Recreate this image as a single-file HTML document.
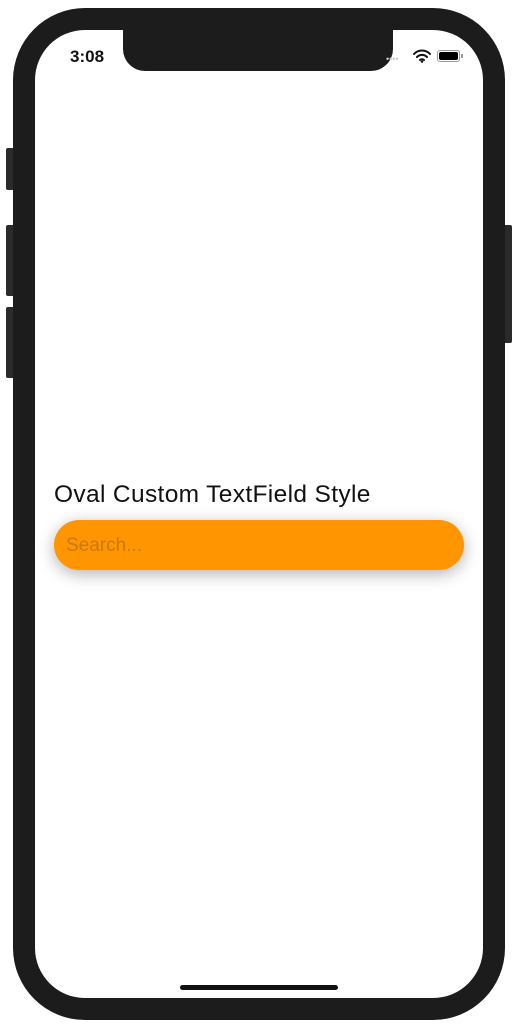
<!DOCTYPE html>
<html><head><style>
body{margin:0;width:517px;height:1024px;background:#fff;position:relative;overflow:hidden;font-family:"Liberation Sans",sans-serif}
.a{position:absolute}
</style></head><body>
<div class="a" style="left:6px;top:148px;width:10px;height:42px;background:#2a2a2a;border-radius:2px"></div>
<div class="a" style="left:6px;top:225px;width:10px;height:71px;background:#2a2a2a;border-radius:2px"></div>
<div class="a" style="left:6px;top:307px;width:10px;height:71px;background:#2a2a2a;border-radius:2px"></div>
<div class="a" style="left:502px;top:225px;width:10px;height:118px;background:#2a2a2a;border-radius:2px"></div>
<div class="a" style="left:13px;top:8px;width:492px;height:1012px;background:#1c1c1c;border-radius:72px"></div>
<div class="a" style="left:35px;top:30px;width:448px;height:968px;background:#fff;border-radius:50px"></div>
<div class="a" style="left:123px;top:28px;width:270px;height:43px;background:#1c1c1c;border-radius:0 0 22px 22px"></div>
<div class="a" style="left:70px;top:47px;font-size:17px;font-weight:bold;color:#111">3:08</div>
<div class="a" style="left:386px;top:54px;font-size:9px;color:#ccc">••••</div>
<svg class="a" style="left:413px;top:49px" width="18" height="14" viewBox="0 0 18 14"><path d="M1 5a11 11 0 0 1 16 0M4 8a7 7 0 0 1 10 0M7 11a3 3 0 0 1 4 0" stroke="#111" stroke-width="2" fill="none" stroke-linecap="round"/><circle cx="9" cy="12.5" r="1.3" fill="#111"/></svg>
<div class="a" style="left:437px;top:50px;width:23px;height:12px;border:1px solid #999;border-radius:3px;box-sizing:border-box;padding:1px"><div style="width:100%;height:100%;background:#000;border-radius:2px"></div></div>
<div class="a" style="left:461px;top:54px;width:2px;height:4px;background:#999"></div>
<div class="a" style="left:54px;top:481px;font-size:24.5px;letter-spacing:0.35px;color:#111">Oval Custom TextField Style</div>
<div class="a" style="left:54px;top:520px;width:410px;height:50px;background:#FF9500;border-radius:25px;box-shadow:0 4px 16px rgba(0,0,0,0.3)"></div>
<div class="a" style="left:66px;top:535px;font-size:19px;color:#c97a10">Search...</div>
<div class="a" style="left:180px;top:985px;width:158px;height:5px;background:#111;border-radius:3px"></div>
</body></html>
